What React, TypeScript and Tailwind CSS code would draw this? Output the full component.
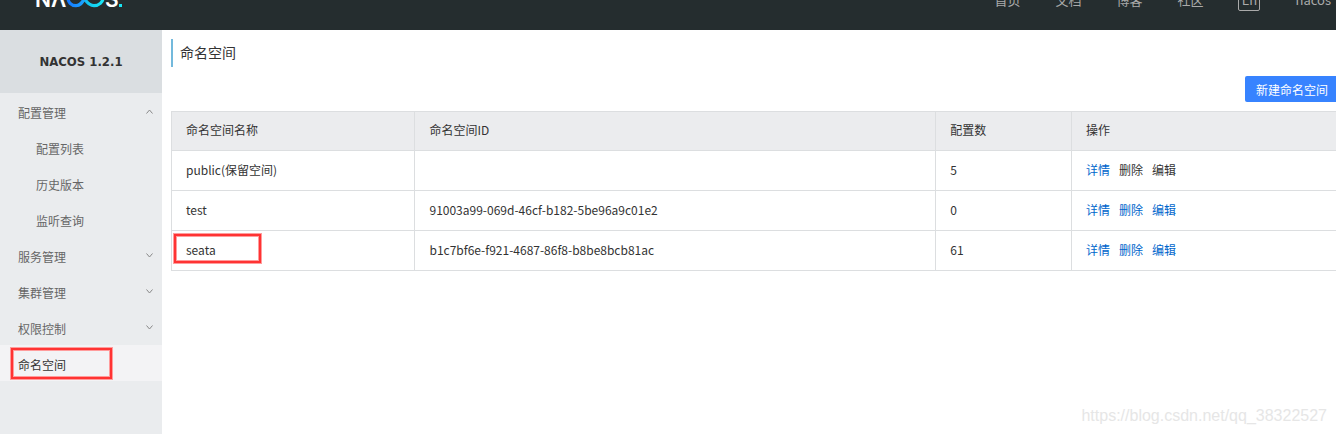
import React, { useState } from 'react';
import clsx from 'clsx';

type Namespace = {
  name: string;
  id: string;
  count: number;
  reserved?: boolean;
};

const namespaces: Namespace[] = [
  { name: 'public(保留空间)', id: '', count: 5, reserved: true },
  { name: 'test', id: '91003a99-069d-46cf-b182-5be96a9c01e2', count: 0 },
  { name: 'seata', id: 'b1c7bf6e-f921-4687-86f8-b8be8bcb81ac', count: 61 },
];

const menuGroups = [
  { title: '配置管理', children: ['配置列表', '历史版本', '监听查询'] },
  { title: '服务管理', children: ['服务列表', '订阅者列表'] },
  { title: '集群管理', children: ['节点列表'] },
  { title: '权限控制', children: ['用户列表', '角色管理', '权限管理'] },
];

const navLinks = ['首页', '文档', '博客', '社区'];

const Logo: React.FC = () => (
  <svg width="92" height="24" viewBox="0 0 92 24" role="img" aria-label="NACOS">
    <defs>
      <linearGradient id="loop" x1="0" x2="1" y1="0" y2="0">
        <stop offset="0" stopColor="#1478ff" />
        <stop offset="0.42" stopColor="#1ba0ff" />
        <stop offset="0.55" stopColor="#10c4f0" />
        <stop offset="1" stopColor="#19e6f5" />
      </linearGradient>
    </defs>
    <g fill="#fff" fontFamily="Inter, sans-serif" fontWeight="600" fontSize="21">
      <text x="3" y="21">N</text>
      <text x="19" y="21">Λ</text>
      <text x="73" y="21">S</text>
    </g>
    {/* C and O share one ribbon */}
    <path
      d="M53 12C50 7 48 4 44 4C39 4 36 8 36 12C36 16 39 19.7 44 19.7C48 19.7 50 17 53 12C56 7 58 4 62 4C67 4 71 8 71 12C71 16 67 19.7 62 19.7C58 19.7 55 17 52 12"
      fill="none"
      stroke="url(#loop)"
      strokeWidth="3.2"
    />
    <rect x="87" y="18" width="3" height="3" fill="#19e6f5" />
  </svg>
);

const Chevron: React.FC<{ open: boolean }> = ({ open }) => (
  <svg width="7" height="5" viewBox="0 0 7 5" fill="none" stroke="#888" aria-hidden="true">
    <path d={open ? 'M0.5 4.5L3.5 1L6.5 4.5' : 'M0.5 0.5L3.5 4L6.5 0.5'} />
  </svg>
);

// Red frame drawn over an item to point it out
const Highlight: React.FC<{ className: string }> = ({ className }) => (
  <span
    aria-hidden="true"
    className={clsx(
      'pointer-events-none absolute border-2 border-[#ff3333] shadow-[0_0_0_1px_#ff9c9c,inset_0_0_0_1px_#ff9c9c]',
      className
    )}
  />
);

const Sidebar: React.FC = () => {
  const [open, setOpen] = useState<string[]>(['配置管理']);

  const toggle = (title: string) => {
    setOpen(open.includes(title) ? open.filter((t) => t !== title) : [...open, title]);
  };

  return (
    <aside className="w-[162px] shrink-0 bg-[#eaecee] text-[#666]">
      <h2 className="flex h-[63px] items-center justify-center bg-[#dadee1] font-['DejaVu_Sans_Condensed','DejaVu_Sans',sans-serif] text-[13px] font-bold text-[#333]">
        NACOS 1.2.1
      </h2>
      <nav>
        {menuGroups.map((group) => (
          <div key={group.title}>
            <button
              className="flex h-9 w-full items-center justify-between pt-1 pr-[9px] pl-[18px]"
              aria-expanded={open.includes(group.title)}
              onClick={() => toggle(group.title)}
            >
              {group.title}
              <span className="pb-1">
                <Chevron open={open.includes(group.title)} />
              </span>
            </button>
            {open.includes(group.title) &&
              group.children.map((child) => (
                <a key={child} href="#" className="flex h-9 items-center pt-1 pl-9">
                  {child}
                </a>
              ))}
          </div>
        ))}
        <a href="#" className="relative flex h-9 items-center bg-[#f3f3f5] pt-1 pl-[18px] text-[#333]">
          命名空间
          <Highlight className="top-[3px] left-[11px] h-[31px] w-[101px]" />
        </a>
      </nav>
    </aside>
  );
};

const NamespaceTable: React.FC = () => (
  <table className="w-full table-fixed border-separate border-spacing-0 border-t border-[#dcdee0] text-left text-[#333]">
    <thead className="bg-[#ebecee]">
      <tr className="h-[39px]">
        <th className="w-[20.9%] border-b border-l border-[#dcdee0] px-[14px] pb-0.5 font-normal">命名空间名称</th>
        <th className="w-[44.7%] border-b border-l border-[#dcdee0] px-[14px] pb-0.5 font-normal">命名空间ID</th>
        <th className="w-[11.65%] border-b border-l border-[#dcdee0] px-[14px] pb-0.5 font-normal">配置数</th>
        <th className="border-b border-l border-[#dcdee0] px-[14px] pb-0.5 font-normal">操作</th>
      </tr>
    </thead>
    <tbody>
      {namespaces.map((ns) => (
        <tr key={ns.name} className="h-10">
          <td className="relative border-b border-l border-[#dcdee0] px-[14px] pb-0.5">
            {ns.name}
            {ns.name === 'seata' && <Highlight className="top-[3px] left-[2px] h-[29px] w-[87px]" />}
          </td>
          <td className="border-b border-l border-[#dcdee0] px-[14px] pb-0.5">{ns.id}</td>
          <td className="border-b border-l border-[#dcdee0] px-[14px] pb-0.5">{ns.count}</td>
          <td className="border-b border-l border-[#dcdee0] px-[14px] pb-0.5">
            <div className="flex gap-[9px] text-[#0066cc]">
              <a href="#">详情</a>
              <button disabled={ns.reserved} className="disabled:text-[#333]">删除</button>
              <button disabled={ns.reserved} className="disabled:text-[#333]">编辑</button>
            </div>
          </td>
        </tr>
      ))}
    </tbody>
  </table>
);

const App: React.FC = () => {
  return (
    <div className="relative flex min-h-screen flex-col bg-white font-['Noto_Sans_CJK_SC',sans-serif] text-[12px] leading-4">
      {/* Top bar */}
      <header className="flex h-[30px] items-end overflow-hidden bg-[#252d2f]">
        <div className="flex h-[60px] w-full shrink-0 items-center justify-between pr-[5px] pl-8">
          <div className="pb-1">
            <Logo />
          </div>
          <nav className="flex items-center gap-[35px] text-[13px] text-[#aaa]">
            {navLinks.map((link) => (
              <a key={link} href="#">
                {link}
              </a>
            ))}
            <button className="h-[22px] w-[22px] rounded-xs border border-[#aaa]">En</button>
            <a href="#">nacos</a>
          </nav>
        </div>
      </header>

      <div className="flex grow">
        <Sidebar />
        <main className="min-w-0 grow pt-[9px] pl-[9px]">
          <h1 className="flex h-7 items-center border-l-2 border-[#73b9dc] pb-0.5 pl-[7px] text-[14px] text-[#333]">
            命名空间
          </h1>
          <div className="mt-[9px] mb-[9px] flex justify-end">
            <button className="h-[26px] rounded-l-xs bg-[#3783ff] pt-px pr-2 pl-[11px] text-white">
              新建命名空间
            </button>
          </div>
          <NamespaceTable />
        </main>
      </div>

      <p className="absolute right-[9px] bottom-[8px] font-['Liberation_Sans',sans-serif] text-[16px] leading-5 text-[#e6e6e6]">
        https://blog.csdn.net/qq_38322527
      </p>
    </div>
  );
};

export default App;
